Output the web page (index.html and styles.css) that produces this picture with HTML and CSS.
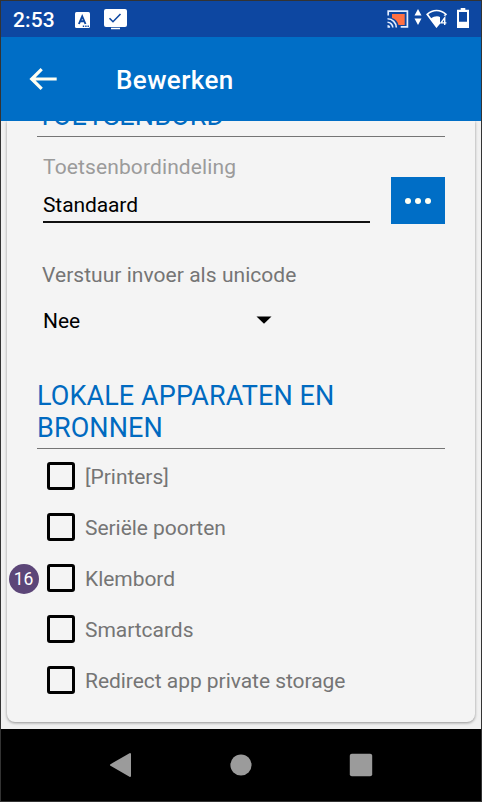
FILE: index.html
```html
<!DOCTYPE html>
<html lang="nl">
<head>
<meta charset="utf-8">
<title>Bewerken</title>
<link rel="stylesheet" href="styles.css">
</head>
<body>
<div class="phone">
  <div class="status">
    <span class="time">2:53</span>
    <svg class="ic-key" width="15" height="16" viewBox="0 0 15 16"><rect width="15" height="16" rx="1.5" fill="#fff"/><path d="M3.900 12 7.200 4.300 10.500 12M5.200 9.300h4" fill="none" stroke="#0d47a1" stroke-width="1.900"/><path d="M7.800 14.200h1.400M10.200 14.200h1.400M12.500 14.200h1.400" stroke="#0d47a1" stroke-width="1.400"/></svg>
    <svg class="ic-screen" width="23" height="21" viewBox="0 0 23 21"><rect width="23" height="18" rx="2" fill="#fff"/><path d="M7 19.500h9" stroke="#fff" stroke-width="1.500"/><path d="m5.500 9.200 3.500 3.500 7.500-7.700" fill="none" stroke="#0d47a1" stroke-width="1.600"/></svg>
    <span class="spacer"></span>
    <svg class="ic-cast" width="22" height="19" viewBox="0 0 22 19"><path d="M5 4h12.700v11h-6.200A10 10 0 0 0 5 8z" fill="#ff7043"/><path d="M1.200 5.500V1.200h19.200v15.600h-6.700" fill="none" stroke="#e3edff" stroke-width="1.700"/><path d="M.5 8.800a8.800 8.800 0 0 1 8.800 8.800M.5 12.300a5.300 5.300 0 0 1 5.300 5.300" fill="none" stroke="#e3edff" stroke-width="1.600"/><path d="M.5 15v2.700h2.700A2.700 2.700 0 0 0 .5 15z" fill="#e3edff"/></svg>
    <svg class="ic-data" width="8" height="17" viewBox="0 0 8 17"><path d="M4 0 7.500 6.500H.5zM4 16 .5 9.500h7z" fill="#fff"/></svg>
    <svg class="ic-wifi" width="22" height="19" viewBox="0 0 22 19"><path d="M10.500 17.700 1.200 5.300C6.800.2 14.400.2 19.900 5.300z" fill="none" stroke="#fff" stroke-width="1.700"/><path d="M10.500 18 4.800 9.500c3.500-2.700 7.500-2.700 9.500-1.300v6.300z" fill="#fff"/><path d="M14 6.800h8V19h-6.500v-3H14z" fill="#0d47a1"/><path d="M18.700 16V8.900l-3.700 5h5.400" fill="none" stroke="#fff" stroke-width="1.400"/></svg>
    <svg class="ic-bat" width="12" height="20" viewBox="0 0 12 20"><path d="M0 1.800h3.700V0h4.600v1.800H12V20H0zM2 4v9.700h8V4z" fill="#fff" fill-rule="evenodd"/></svg>
  </div>
  <header class="bar">
    <svg class="back" width="28" height="22" viewBox="0 0 28 22"><path d="M12.700 1.200 2.700 11l10 9.800M2.700 11H27.700" fill="none" stroke="#fffff2" stroke-width="3.200"/></svg>
    <h1>Bewerken</h1>
  </header>
  <main class="content">
    <div class="card">
      <h2 class="first"><span>TOETSENBORD</span></h2>
      <div class="field-row">
        <div class="field">
          <label class="hint">Toetsenbordindeling</label>
          <div class="value">Standaard</div>
        </div>
        <div class="more"><i></i><i></i><i></i></div>
      </div>
      <div class="unicode">Verstuur invoer als unicode</div>
      <div class="select"><span>Nee</span><svg width="16" height="8" viewBox="0 0 16 8"><path d="M.5.500h15L8 7.800z"/></svg></div>
      <h2 class="second"><span>LOKALE APPARATEN EN<br>BRONNEN</span></h2>
      <ul>
        <li><b></b><span>[Printers]</span></li>
        <li><b></b><span>Seriële poorten</span></li>
        <li><em class="badge">16</em><b></b><span>Klembord</span></li>
        <li><b></b><span>Smartcards</span></li>
        <li><b></b><span>Redirect app private storage</span></li>
      </ul>
    </div>
  </main>
  <nav>
    <svg width="24" height="26" viewBox="0 0 24 26"><path d="M2 13 21 2v22z" fill="#9b9b9b" stroke="#9b9b9b" stroke-width="2" stroke-linejoin="round"/></svg>
    <svg width="24" height="26" viewBox="0 0 24 26"><circle cx="12" cy="13" r="10.600" fill="#9b9b9b"/></svg>
    <svg width="24" height="26" viewBox="0 0 24 26"><rect x=".8" y="1.800" width="22.400" height="22.400" rx="2" fill="#9b9b9b"/></svg>
  </nav>
</div>
</body>
</html>
```

FILE: styles.css
```css
* { box-sizing: border-box; }
body { margin: 0; font-family: Roboto, sans-serif; }
.phone {
  width: 482px; height: 802px; border: 1px solid #333;
  display: flex; flex-direction: column; overflow: hidden; background: #000;
}
.status {
  height: 36px; flex: none; background: #0d47a1; color: #fff;
  display: flex; align-items: flex-start; padding: 0 12px;
}
.status svg { display: block; flex: none; }
.time { font-size: 21px; font-weight: 500; line-height: 24px; margin-top: 7px; width: 62px; letter-spacing: .1px; }
.ic-key { margin-top: 11px; }
.ic-screen { margin: 8px 0 0 14px; }
.spacer { flex: 1; }
.ic-cast { margin: 9px 5px 0 0; }
.ic-data { margin: 8px 4px 0 0; }
.ic-wifi { margin: 8px 9px 0 0; }
.ic-bat { margin-top: 7px; }
.bar {
  height: 84px; flex: none; background: #006ec6; color: #fff;
  display: flex; align-items: center; padding-left: 28px;
}
.bar h1 { font-size: 26px; font-weight: 500; line-height: 32px; margin: 2px 0 0 59px; letter-spacing: .4px; }
.content {
  height: 608px; flex: none; background: #f0f0f0; padding: 0 6px; overflow: hidden;
}
.card {
  height: 601px; background: #f4f4f4; border-radius: 0 0 8px 8px;
  box-shadow: 0 1px 3px rgba(0,0,0,.4); padding: 0 30px;
}
h2 {
  margin: 0; font-size: 27px; font-weight: 400; line-height: 32px; color: #006ac0;
  border-bottom: 1px solid #757575; display: flex; align-items: flex-end; letter-spacing: .1px;
}
.first { height: 16px; padding-bottom: 4px; }
.second { height: 73px; padding-bottom: 4px; margin-top: 43px; }
.field-row { height: 87px; display: flex; justify-content: space-between; padding-left: 6px; }
.field { width: 327px; padding-top: 18px; }
.hint { display: block; font-size: 21px; line-height: 24px; color: #9b9b9b; letter-spacing: .12px; }
.value {
  height: 44px; padding-top: 14px; font-size: 21px; line-height: 24px; color: #000;
  border-bottom: 2px solid #111; letter-spacing: -.1px;
}
.more {
  width: 54px; height: 47px; margin-top: 40px; background: #006ec6;
  display: flex; align-items: center; justify-content: center; gap: 3.700px;
}
.more i { width: 6px; height: 6px; border-radius: 50%; background: #fffff2; }
.unicode { margin-top: 39px; padding-left: 5px; font-size: 21px; line-height: 24px; color: #757575; letter-spacing: .04px; }
.select {
  margin-top: 22px; padding-left: 6px; height: 24px; width: 235px; font-size: 21px;
  line-height: 24px; display: flex; justify-content: space-between; align-items: center;
}
.select svg { margin-top: -3px; }
ul { list-style: none; margin: 2px 0 0; padding: 0; }
li {
  position: relative; height: 51px; display: flex; align-items: center;
  padding-left: 10px; font-size: 21px; line-height: 24px; color: #757575; letter-spacing: -.04px;
}
li b { width: 28px; height: 28px; border: 3px solid #000; border-radius: 3px; margin: 0 10px 2px 0; }
.badge {
  position: absolute; left: -28.500px; top: 10.500px; width: 30px; height: 30px; border-radius: 50%;
  background: #5c4678; color: #fff; font: 400 17.500px/30px Roboto, sans-serif; text-align: center;
}
nav {
  flex: 1; background: #000; display: flex; gap: 96px; padding: 23px 0 0 107.600px;
}
```
